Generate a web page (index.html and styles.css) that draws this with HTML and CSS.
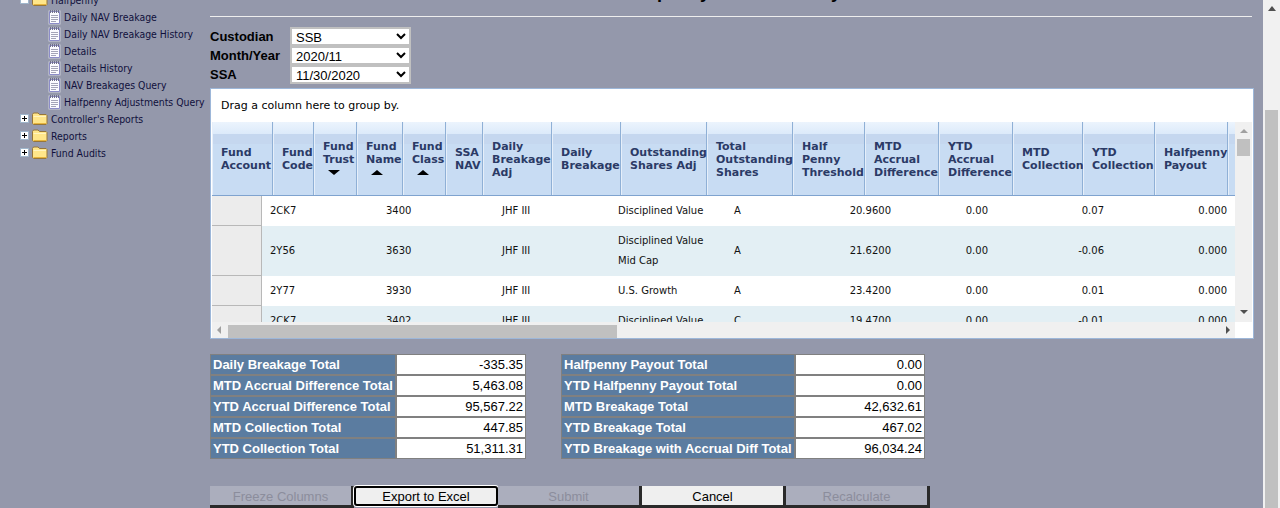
FILE: index.html
```html
<!DOCTYPE html>
<html lang="en">
<head>
  <meta charset="UTF-8">
  <title>Halfpenny Details History</title>
  <link rel="stylesheet" href="styles.css">
</head>
<body>
  <svg class="icon-defs" width="0" height="0">
    <symbol id="ico-doc" viewBox="0 0 13 16">
      <path d="M.5 1.5h12v14H.5z" fill="#fff" opacity=".55"/>
      <path d="M1.5 2.5h10v12h-10z" fill="#fbfbff" stroke="#8c8cc8"/>
      <path d="M2.5 1v3M4.5 1v3M6.5 1v3M8.5 1v3M10.5 1v3" stroke="#70708a"/>
      <path d="M3 6.5h7M3 8.5h7M3 10.5h7M3 12.5h5" stroke="#a4a4b8"/>
    </symbol>
    <symbol id="ico-folder" viewBox="0 0 16 13">
      <path d="M.5 11.5v-9l1-1.5h4.5l1.5 1.5h6.5l1 1v8l-1 1h-12.5z" fill="#ffe68a" stroke="#96763a"/>
      <path d="M1.5 4.5h12.5" stroke="#fff4c0"/>
      <path d="M1.5 11.5h13" stroke="#e6b43c"/>
    </symbol>
    <symbol id="ico-plus" viewBox="0 0 9 9">
      <path d="M.5.5h8v8h-8z" fill="#fff" stroke="#9fb6cc"/>
      <path d="M2 4.5h5M4.5 2v5" stroke="#000"/>
    </symbol>
    <symbol id="ico-minus" viewBox="0 0 9 9">
      <path d="M.5.5h8v8h-8z" fill="#fff" stroke="#9fb6cc"/>
      <path d="M2 4.5h5" stroke="#000"/>
    </symbol>
  </svg>

  <div class="page">
    <aside class="tree">
      <div class="tree-row"><svg class="ico-box"><use href="#ico-minus"/></svg><svg class="ico-folder"><use href="#ico-folder"/></svg><span>Halfpenny</span></div>
      <div class="tree-row leaf"><svg class="ico-doc"><use href="#ico-doc"/></svg><span>Daily NAV Breakage</span></div>
      <div class="tree-row leaf"><svg class="ico-doc"><use href="#ico-doc"/></svg><span>Daily NAV Breakage History</span></div>
      <div class="tree-row leaf"><svg class="ico-doc"><use href="#ico-doc"/></svg><span>Details</span></div>
      <div class="tree-row leaf"><svg class="ico-doc"><use href="#ico-doc"/></svg><span>Details History</span></div>
      <div class="tree-row leaf"><svg class="ico-doc"><use href="#ico-doc"/></svg><span>NAV Breakages Query</span></div>
      <div class="tree-row leaf"><svg class="ico-doc"><use href="#ico-doc"/></svg><span>Halfpenny Adjustments Query</span></div>
      <div class="tree-row"><svg class="ico-box"><use href="#ico-plus"/></svg><svg class="ico-folder"><use href="#ico-folder"/></svg><span>Controller's Reports</span></div>
      <div class="tree-row"><svg class="ico-box"><use href="#ico-plus"/></svg><svg class="ico-folder"><use href="#ico-folder"/></svg><span>Reports</span></div>
      <div class="tree-row"><svg class="ico-box"><use href="#ico-plus"/></svg><svg class="ico-folder"><use href="#ico-folder"/></svg><span>Fund Audits</span></div>
    </aside>

    <main class="content">
      <h1 class="page-title">Halfpenny Details History</h1>
      <hr class="title-rule">

      <div class="filters">
        <label for="custodian">Custodian</label>
        <select id="custodian"><option>SSB</option></select>
        <label for="monthYear">Month/Year</label>
        <select id="monthYear"><option>2020/11</option></select>
        <label for="ssa">SSA</label>
        <select id="ssa"><option>11/30/2020</option></select>
      </div>

      <section class="grid-box">
        <div class="group-panel">Drag a column here to group by.</div>
        <div class="grid-middle">
          <div class="grid-cols">
            <div class="grid-head">
              <div class="hcell">Fund<br>Account</div>
              <div class="hcell">Fund<br>Code</div>
              <div class="hcell">Fund<br>Trust<i class="sort down"></i></div>
              <div class="hcell">Fund<br>Name<i class="sort up"></i></div>
              <div class="hcell">Fund<br>Class<i class="sort up"></i></div>
              <div class="hcell">SSA<br>NAV</div>
              <div class="hcell">Daily<br>Breakage<br>Adj</div>
              <div class="hcell">Daily<br>Breakage</div>
              <div class="hcell">Outstanding<br>Shares Adj</div>
              <div class="hcell">Total<br>Outstanding<br>Shares</div>
              <div class="hcell">Half<br>Penny<br>Threshold</div>
              <div class="hcell">MTD<br>Accrual<br>Difference</div>
              <div class="hcell">YTD<br>Accrual<br>Difference</div>
              <div class="hcell">MTD<br>Collection</div>
              <div class="hcell">YTD<br>Collection</div>
              <div class="hcell">Halfpenny<br>Payout</div>
              <div class="hcell"></div>
            </div>
            <div class="grid-row">
              <div class="sel"></div><div>2CK7</div><div>3400</div><div>JHF III</div><div>Disciplined Value</div><div>A</div>
              <div class="num">20.9600</div><div class="num">0.00</div><div class="num">0.07</div><div class="num">0.000</div>
            </div>
            <div class="grid-row alt">
              <div class="sel"></div><div>2Y56</div><div>3630</div><div>JHF III</div><div>Disciplined Value<br>Mid Cap</div><div>A</div>
              <div class="num">21.6200</div><div class="num">0.00</div><div class="num">-0.06</div><div class="num">0.000</div>
            </div>
            <div class="grid-row">
              <div class="sel"></div><div>2Y77</div><div>3930</div><div>JHF III</div><div>U.S. Growth</div><div>A</div>
              <div class="num">23.4200</div><div class="num">0.00</div><div class="num">0.01</div><div class="num">0.000</div>
            </div>
            <div class="grid-row alt">
              <div class="sel"></div><div>2CK7</div><div>3402</div><div>JHF III</div><div>Disciplined Value</div><div>C</div>
              <div class="num">19.4700</div><div class="num">0.00</div><div class="num">-0.01</div><div class="num">0.000</div>
            </div>
          </div>
          <div class="vscroll">
            <i class="arrow up"></i>
            <div class="vthumb"></div>
            <i class="arrow down"></i>
          </div>
        </div>
        <div class="hscroll">
          <i class="arrow left"></i>
          <div class="hthumb"></div>
          <i class="arrow right"></i>
        </div>
      </section>

      <div class="totals">
        <div class="totals-table left">
          <div class="t-label">Daily Breakage Total</div><div class="t-value">-335.35</div>
          <div class="t-label">MTD Accrual Difference Total</div><div class="t-value">5,463.08</div>
          <div class="t-label">YTD Accrual Difference Total</div><div class="t-value">95,567.22</div>
          <div class="t-label">MTD Collection Total</div><div class="t-value">447.85</div>
          <div class="t-label">YTD Collection Total</div><div class="t-value">51,311.31</div>
        </div>
        <div class="totals-table right">
          <div class="t-label">Halfpenny Payout Total</div><div class="t-value">0.00</div>
          <div class="t-label">YTD Halfpenny Payout Total</div><div class="t-value">0.00</div>
          <div class="t-label">MTD Breakage Total</div><div class="t-value">42,632.61</div>
          <div class="t-label">YTD Breakage Total</div><div class="t-value">467.02</div>
          <div class="t-label">YTD Breakage with Accrual Diff Total</div><div class="t-value">96,034.24</div>
        </div>
      </div>

      <div class="buttons">
        <button disabled>Freeze Columns</button>
        <button class="focused">Export to Excel</button>
        <button disabled>Submit</button>
        <button>Cancel</button>
        <button disabled>Recalculate</button>
      </div>
    </main>

    <div class="page-scroll">
      <i class="arrow-page"></i>
      <div class="page-thumb"></div>
    </div>
  </div>
</body>
</html>
```

FILE: styles.css
```css
html, body {
  margin: 0;
  height: 100%;
  overflow: hidden;
}

body {
  background-color: #9498ab;
  font-family: "Liberation Sans", Arial, sans-serif;
  color: #000;
}

.icon-defs {
  display: block;
  height: 0;
}

.page {
  display: flex;
  height: 508px;
  overflow: hidden;
}

/* left tree, the page is scrolled down a bit so first row is cut */
.tree {
  flex: 0 0 210px;
  margin-top: -9px;
  padding-left: 20px;
  box-sizing: border-box;
  font-family: "DejaVu Sans Condensed", "DejaVu Sans", sans-serif;
  font-size: 10.4px;
  color: #10103c;
}

.tree-row {
  display: flex;
  align-items: center;
  height: 17px;
  white-space: nowrap;
}

.tree-row.leaf {
  padding-left: 28px;
}

.ico-box {
  width: 9px;
  height: 9px;
  margin-right: 3px;
  flex: none;
}

.ico-folder {
  width: 16px;
  height: 13px;
  margin-right: 3px;
  flex: none;
}

.ico-doc {
  width: 13px;
  height: 16px;
  margin-right: 3px;
  flex: none;
}

.content {
  flex: 0 0 1044px;
}

.page-title {
  margin: -19px 0 0;
  height: 22px;
  font-size: 18px;
  line-height: 22px;
  text-align: center;
}

.title-rule {
  margin: 13px 2px 0 0;
  border: none;
  height: 1px;
  background-color: #eeeeee;
}

.filters {
  display: grid;
  grid-template-columns: 80px 121px;
  grid-auto-rows: 19px;
  align-items: center;
  margin-top: 10px;
  font-size: 13px;
  font-weight: bold;
}

.filters label {
  line-height: 19px;
}

.filters select {
  width: 121px;
  height: 19px;
  box-sizing: border-box;
  border: 2px solid #c0c0c0;
  background-color: #fff;
  font-family: "Liberation Sans", Arial, sans-serif;
  font-size: 13px;
  padding: 0 0 2px;
}

.grid-box {
  width: 1044px;
  box-sizing: border-box;
  margin-top: 4px;
  border: 1px solid #9db7d9;
  background-color: #fff;
  padding: 0 1px 0 1px;
}

.group-panel {
  height: 33px;
  line-height: 33px;
  padding-left: 9px;
  font-family: "DejaVu Sans", Verdana, sans-serif;
  font-size: 11px;
}

.grid-middle {
  display: flex;
  height: 200px;
}

.grid-cols {
  width: 1023px;
  overflow: hidden;
  font-family: "DejaVu Sans", Verdana, sans-serif;
  font-size: 10px;
}

.grid-head {
  display: grid;
  grid-template-columns: 61px 41px 43px 46px 43px 37px 69px 69px 86px 86px 72px 74px 74px 70px 72px 73px 7px;
  height: 74px;
  border-bottom: 1px solid #7fa3cf;
  box-sizing: border-box;
}

.hcell {
  align-content: center;
  box-sizing: border-box;
  padding: 1px 0 0 9px;
  border-right: 1px solid #8fb0d6;
  background: linear-gradient(#ecf4fd 0, #dceafa 12px, #c5d7ef 12px, #c5d7ef 22px, #c8dcf3 22px);
  box-shadow: inset 1px 0 0 #e6effa;
  font-size: 11px;
  font-weight: bold;
  line-height: 13px;
  color: #2b3a66;
}

.sort {
  display: block;
  width: 0;
  height: 0;
  margin: 4px 0 4px 5px;
  border-left: 6px solid transparent;
  border-right: 6px solid transparent;
}

.sort.down {
  border-top: 5px solid #000;
}

.sort.up {
  border-bottom: 5px solid #000;
}

.grid-row {
  display: grid;
  grid-template-columns: 50px 116px 116px 116px 116px 116px 57px 97px 116px 123px;
  align-items: center;
  line-height: 20px;
  color: #111;
}

.grid-row > div {
  padding: 5px 0 5px 8px;
  white-space: nowrap;
  box-sizing: border-box;
}

.grid-row > .num {
  padding: 5px 8px 5px 0;
  text-align: right;
}

.grid-row > .sel {
  align-self: stretch;
  padding: 0;
  background-color: #ececec;
  border-right: 1px solid #b8b8b8;
  border-bottom: 1px solid #b8b8b8;
}

.grid-row.alt {
  background-color: #e3eff4;
}

.vscroll {
  display: flex;
  flex-direction: column;
  align-items: center;
  width: 17px;
  background-color: #f0f0f0;
}

.vthumb {
  width: 13px;
  height: 17px;
  margin-top: 6px;
  background-color: #c0c0c0;
}

.hscroll {
  display: flex;
  align-items: center;
  width: 1023px;
  height: 16px;
  background-color: #f0f0f0;
}

.hthumb {
  width: 389px;
  height: 13px;
  margin: 3px 0 0 7px;
  background-color: #c0c0c0;
}

.arrow {
  display: block;
  width: 0;
  height: 0;
}

.arrow.up {
  margin-top: 7px;
  border-left: 4px solid transparent;
  border-right: 4px solid transparent;
  border-bottom: 4px solid #a0a0a0;
}

.arrow.down {
  margin-top: 154px;
  border-left: 4px solid transparent;
  border-right: 4px solid transparent;
  border-top: 4px solid #505050;
}

.arrow.left {
  margin-left: 5px;
  border-top: 4px solid transparent;
  border-bottom: 4px solid transparent;
  border-right: 4px solid #a0a0a0;
}

.arrow.right {
  margin-left: auto;
  margin-right: 5px;
  border-top: 4px solid transparent;
  border-bottom: 4px solid transparent;
  border-left: 4px solid #505050;
}

.totals {
  display: flex;
  gap: 35px;
  margin-top: 15px;
}

.totals-table {
  display: grid;
  grid-auto-rows: 19px;
  gap: 2px;
  padding: 1px;
  background-color: #808080;
  font-size: 13px;
  line-height: 19px;
}

.totals-table.left {
  grid-template-columns: 184px 128px;
}

.totals-table.right {
  grid-template-columns: 232px 128px;
}

.t-label {
  padding-left: 2px;
  background-color: #5b7ca0;
  color: #fff;
  font-weight: bold;
  white-space: nowrap;
}

.t-value {
  padding-right: 2px;
  background-color: #fff;
  text-align: right;
}

.buttons {
  display: flex;
  align-items: flex-start;
  margin-top: 27px;
}

.buttons button {
  flex: none;
  width: 144px;
  height: 22px;
  padding: 2px 0 0;
  box-sizing: border-box;
  border: none;
  border-right: 3px solid #2a2a2a;
  border-bottom: 3px solid #2a2a2a;
  background-color: #efefef;
  color: #000;
  font-family: "Liberation Sans", Arial, sans-serif;
  font-size: 13px;
}

.buttons button:disabled {
  background-color: #abaebd;
  color: #8b8d9c;
}

.buttons .focused {
  height: 20px;
  padding: 0;
  border: 2px solid #000;
  border-radius: 3px;
  box-shadow: 0 0 0 1px #fff;
}

.page-scroll {
  display: flex;
  flex-direction: column;
  align-items: center;
  width: 17px;
  margin-left: auto;
  background-color: #f1f1f1;
}

.arrow-page {
  display: block;
  width: 0;
  height: 0;
  margin-top: 6px;
  border-left: 4px solid transparent;
  border-right: 4px solid transparent;
  border-bottom: 5px solid #505050;
}

.page-thumb {
  width: 13px;
  height: 398px;
  margin-top: 99px;
  background-color: #c0c0c0;
}
```
